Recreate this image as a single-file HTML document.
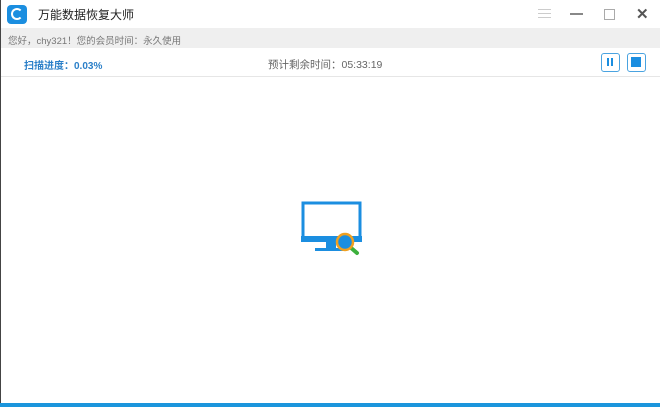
<!DOCTYPE html>
<html><head><meta charset="utf-8"><style>
body{margin:0;width:660px;height:407px;overflow:hidden;background:#fff;font-family:"Liberation Sans","Noto Sans CJK SC",sans-serif;position:relative}
.a{position:absolute}
</style></head><body>
<div class="a" style="left:0;top:0;width:1px;height:407px;background:#444"></div>
<div class="a" style="left:7px;top:5px;width:20px;height:19px;background:#1b8ee0;border-radius:4px"></div>
<div class="a" style="left:11px;top:8px;width:8px;height:8px;border:2px solid #fff;border-radius:50%;border-right-color:transparent"></div>
<div class="a" style="left:38px;top:6px;font-size:12px;color:#222">万能数据恢复大师</div>
<div class="a" style="left:538px;top:9px;width:13px;height:1px;background:#ccc;box-shadow:0 4px #ccc,0 8px #ccc"></div>
<div class="a" style="left:570px;top:13px;width:13px;height:2px;background:#888"></div>
<div class="a" style="left:604px;top:9px;width:9px;height:9px;border:1px solid #aaa"></div>
<div class="a" style="left:636px;top:5px;font-size:15px;color:#555;font-weight:bold">✕</div>
<div class="a" style="left:1px;top:28px;width:659px;height:20px;background:#efefef"></div>
<div class="a" style="left:8px;top:33px;font-size:9.5px;color:#777">您好，chy321！您的会员时间：永久使用</div>
<div class="a" style="left:24px;top:57px;font-size:10px;color:#2a7fc8;font-weight:bold">扫描进度：0.03%</div>
<div class="a" style="left:268px;top:57px;font-size:10.5px;color:#666">预计剩余时间：05:33:19</div>
<div class="a" style="left:601px;top:53px;width:17px;height:17px;border:1px solid #4aa3e0;border-radius:3px"></div>
<div class="a" style="left:607px;top:58px;width:2px;height:8px;background:#1b8ee0;box-shadow:4px 0 #1b8ee0"></div>
<div class="a" style="left:627px;top:53px;width:17px;height:17px;border:1px solid #4aa3e0;border-radius:3px"></div>
<div class="a" style="left:631px;top:57px;width:10px;height:10px;background:#1b8ee0"></div>
<div class="a" style="left:1px;top:76px;width:659px;height:1px;background:#e6e6e6"></div>
<svg class="a" style="left:290px;top:190px" width="80" height="70">
<rect x="13" y="13" width="57" height="35" fill="none" stroke="#1b8ee0" stroke-width="3"/>
<rect x="11" y="46" width="61" height="6" fill="#1b8ee0"/>
<rect x="36" y="52" width="10" height="6" fill="#1b8ee0"/>
<rect x="25" y="58" width="32" height="3" fill="#1b8ee0"/>
<line x1="60" y1="57" x2="67" y2="63" stroke="#3db03d" stroke-width="4" stroke-linecap="round"/>
<circle cx="55" cy="52" r="8" fill="#1b8ee0" stroke="#f0a020" stroke-width="2.5"/>
</svg>
<div class="a" style="left:0;top:403px;width:660px;height:4px;background:#1b95dc"></div>
</body></html>
